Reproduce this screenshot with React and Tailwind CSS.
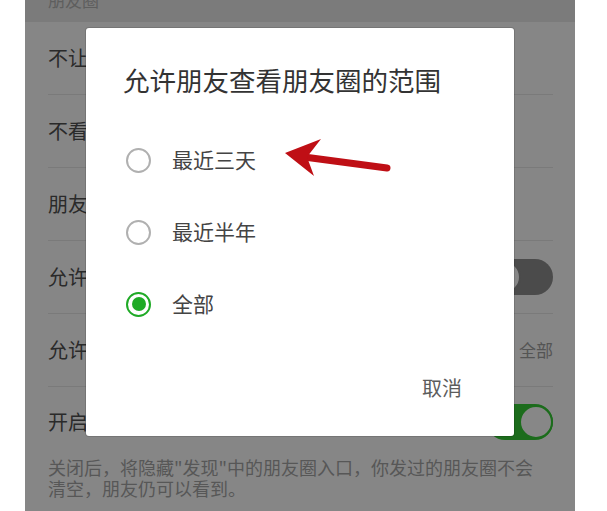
import React from 'react';

const rows = [
  { label: '不让他（她）看我的朋友圈' },
  { label: '不看他（她）的朋友圈' },
  { label: '朋友圈黑名单' },
  { label: '允许陌生人查看十条朋友圈', right: 'off' },
  { label: '允许朋友查看朋友圈的范围', right: 'text' },
  { label: '开启朋友圈入口', right: 'on', last: true },
];

const options = [
  { label: '最近三天', checked: false },
  { label: '最近半年', checked: false },
  { label: '全部', checked: true },
];

const Toggle = ({ on }) => (
  <div
    className={`w-[66px] h-[36px] rounded-full flex items-center ${
      on ? 'bg-[#1c6c1c] justify-end' : 'bg-[#4b4b4b] justify-start'
    }`}
  >
    <div
      className={`w-[34px] h-[34px] rounded-full bg-[#878787] border-2 ${
        on ? 'border-[#1c6c1c]' : 'border-[#4b4b4b]'
      }`}
    />
  </div>
);

const Radio = ({ checked }) =>
  checked ? (
    <div className="w-[25px] h-[25px] rounded-full border-[2.5px] border-[#1faa26] flex items-center justify-center">
      <div className="w-[14px] h-[14px] rounded-full bg-[#1faa26]" />
    </div>
  ) : (
    <div className="w-[25px] h-[25px] rounded-full border-2 border-[#b0b0b0]" />
  );

export default function App() {
  return (
    <div
      className="relative w-[607px] h-[511px] bg-white overflow-hidden"
      style={{ fontFamily: '"Noto Sans CJK SC", "Noto Sans", sans-serif' }}
    >
      {/* settings page, dimmed */}
      <div className="ml-[25px] w-[550px] h-full bg-[#868686] flex flex-col">
        <div className="h-[22px] bg-[#7b7b7b] overflow-hidden pl-[23px]">
          <div className="text-[17px] leading-none text-[#5e5e5e] mt-[-9px]">朋友圈</div>
        </div>

        {rows.map((r, i) => (
          <div
            key={i}
            className={`ml-[23px] mr-[22px] flex items-center justify-between ${
              r.last ? 'h-[70px]' : 'h-[73px] border-b border-[#7a7a7a]'
            }`}
          >
            <span className="text-[20px] text-[#2a2a2a] whitespace-nowrap">{r.label}</span>
            {r.right === 'off' && <Toggle on={false} />}
            {r.right === 'on' && <Toggle on />}
            {r.right === 'text' && <span className="text-[17px] text-[#545454]">全部</span>}
          </div>
        ))}

        <div className="pl-[23px] text-[18px] leading-[21px] text-[#575757] whitespace-nowrap">
          关闭后，将隐藏"发现"中的朋友圈入口，你发过的朋友圈不会
          <br />
          清空，朋友仍可以看到。
        </div>
      </div>

      {/* dialog */}
      <div className="absolute left-[86px] top-[28px] w-[428px] h-[408px] bg-white rounded-[3px] shadow-[0_0_0_1px_rgba(0,0,0,0.12)] flex flex-col">
        <div className="pt-[39px] pl-[37px] text-[26.5px] leading-[26px] text-[#333]">
          允许朋友查看朋友圈的范围
        </div>
        <div className="mt-[31px] flex flex-col">
          {options.map((o) => (
            <div key={o.label} className="h-[72px] flex items-center pl-[40px]">
              <Radio checked={o.checked} />
              <span className="ml-[21px] text-[21px] text-[#444]">{o.label}</span>
            </div>
          ))}
        </div>
        <div className="mt-auto pb-[38px] pr-[52px] flex justify-end">
          <span className="text-[20px] leading-[20px] text-[#5c5c5c]">取消</span>
        </div>
      </div>

      {/* red annotation arrow */}
      <svg className="absolute left-0 top-0 pointer-events-none" width="607" height="511" viewBox="0 0 607 511">
        <line x1="304" y1="157" x2="387" y2="168" stroke="#bf0f15" strokeWidth="7" strokeLinecap="round" />
        <path d="M285 153 L321 139 L307 157 L314 176 Z" fill="#bf0f15" strokeLinejoin="round" />
      </svg>
    </div>
  );
}
